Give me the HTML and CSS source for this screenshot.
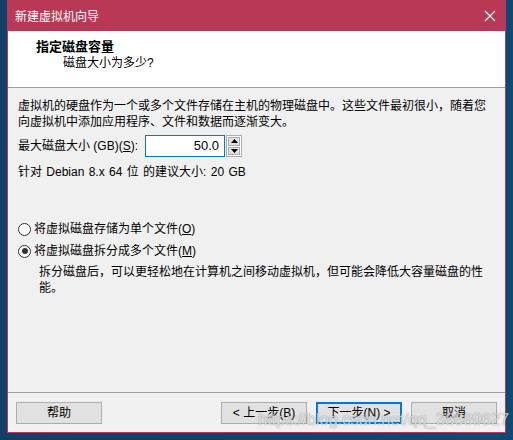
FILE: index.html
```html
<!DOCTYPE html>
<html lang="zh-CN">
<head>
<meta charset="utf-8">
<title>新建虚拟机向导</title>
<link rel="stylesheet" href="styles.css">
</head>
<body>
<div class="window">
  <div class="titlebar">
    <span class="title">新建虚拟机向导</span>
    <svg class="close" width="12" height="12" viewBox="0 0 12 12"><path d="M1 1 L11 11 M11 1 L1 11" stroke="#fff" stroke-width="1.3" fill="none"/></svg>
  </div>
  <div class="header">
    <div class="h-title">指定磁盘容量</div>
    <div class="h-sub">磁盘大小为多少?</div>
  </div>
  <div class="content">
    <p class="intro">虚拟机的硬盘作为一个或多个文件存储在主机的物理磁盘中。这些文件最初很小，随着您向虚拟机中添加应用程序、文件和数据而逐渐变大。</p>
    <div class="size-row">
      <span class="size-label">最大磁盘大小 (GB)(<u>S</u>):</span>
      <div class="spin">
        <div class="spin-input">50.0</div>
        <div class="spin-btns">
          <div class="spin-btn"><svg width="7" height="4" viewBox="0 0 7 4"><path d="M0 4 L3.5 0 L7 4 Z" fill="#000"/></svg></div>
          <div class="spin-btn"><svg width="7" height="4" viewBox="0 0 7 4"><path d="M0 0 L3.5 4 L7 0 Z" fill="#000"/></svg></div>
        </div>
      </div>
    </div>
    <p class="recommend">针对 Debian 8.x 64 位 的建议大小: 20 GB</p>
    <div class="radios">
      <div class="radio-row"><span class="radio"></span><span>将虚拟磁盘存储为单个文件(<u>O</u>)</span></div>
      <div class="radio-row"><span class="radio checked"></span><span>将虚拟磁盘拆分成多个文件(<u>M</u>)</span></div>
      <p class="desc">拆分磁盘后，可以更轻松地在计算机之间移动虚拟机，但可能会降低大容量磁盘的性能。</p>
    </div>
  </div>
  <div class="footer">
    <button class="btn">帮助</button>
    <div class="spacer"></div>
    <button class="btn">&lt; 上一步(B)</button>
    <button class="btn default">下一步(N) &gt;</button>
    <button class="btn">取消</button>
  </div>
</div>
<div class="watermark">https://blog.csdn.net/qq_38689627</div>
</body>
</html>
```
FILE: styles.css
```css
* { box-sizing: border-box; }
html, body { margin: 0; padding: 0; }
body {
  width: 513px;
  height: 440px;
  background: linear-gradient(90deg, #123f66 0%, #0d4a72 100%);
  font-family: "Liberation Sans", "Noto Sans CJK SC", sans-serif;
  font-size: 12px;
  line-height: 16px;
  color: #000;
  position: relative;
  overflow: hidden;
}
.window {
  margin-left: 7px;
  width: 499px;
  height: 433px;
  border: 1px solid #b93855;
  border-top: none;
  background: #f0f0f0;
  display: flex;
  flex-direction: column;
}
.titlebar {
  height: 31px;
  background: #b93855;
  color: #fff;
  display: flex;
  align-items: center;
  justify-content: space-between;
  padding: 0 9px 0 7px;
}
.title { font-family: "Noto Sans CJK SC", sans-serif; font-size: 12px; }
.close { display: block; }
.header {
  height: 57px;
  background: #fff;
  border-bottom: 1px solid #a0a0a0;
  padding: 8px 0 0 28px;
}
.h-title { font-weight: bold; font-size: 13px; }
.h-sub { padding-left: 27px; }
.content {
  flex: 1;
  padding: 10px 0 0 10px;
}
.intro { margin: 0; width: 470px; }
.size-row {
  display: flex;
  align-items: center;
  margin-top: 5px;
  height: 22px;
}
.size-label { width: 127px; }
.spin { display: flex; height: 22px; }
.spin-input {
  width: 80px;
  height: 22px;
  border: 1px solid #0078d7;
  background: #fff;
  text-align: right;
  padding: 2px 5px 0 0;
  font-size: 13px;
}
.spin-btns {
  margin-left: 1px;
  width: 16px;
  height: 22px;
  border: 1px solid #adadad;
  background: #fff;
  display: flex;
  flex-direction: column;
  gap: 1px;
  padding: 1px;
}
.spin-btn {
  flex: 1;
  background: #e1e1e1;
  border: 1px solid #adadad;
  display: flex;
  align-items: center;
  justify-content: center;
}
.spin-btn svg { display: block; }
.recommend { margin: 7px 0 0; word-spacing: 1px; }
.radios { margin-top: 41px; }
.radio-row {
  display: flex;
  align-items: center;
  height: 16px;
  margin-bottom: 6px;
}
.radio {
  width: 13px;
  height: 13px;
  border: 1px solid #333;
  border-radius: 50%;
  background: #fff;
  margin-right: 3px;
  position: relative;
}
.radio.checked::after {
  content: "";
  position: absolute;
  left: 2.5px;
  top: 2.5px;
  width: 6px;
  height: 6px;
  border-radius: 50%;
  background: #333;
}
.desc {
  margin: -1px 0 0 21px;
  width: 450px;
}
.footer {
  height: 40px;
  border-top: 1px solid #a0a0a0;
  display: flex;
  align-items: flex-start;
  padding: 9px 8px 0 8px;
  gap: 9px;
}
.spacer { flex: 1; }
.btn {
  width: 86px;
  height: 22px;
  background: #e1e1e1;
  border: 1px solid #adadad;
  font-family: "Liberation Sans", "Noto Sans CJK SC", sans-serif;
  font-size: 12px;
  line-height: 16px;
  color: #000;
  padding: 0;
}
.btn.default { border: 2px solid #0078d7; }
.watermark {
  position: absolute;
  left: 258px;
  top: 409px;
  font-family: "Liberation Sans", sans-serif;
  font-size: 17px;
  line-height: 22px;
  letter-spacing: -0.3px;
  color: rgba(255,255,255,0.7);
  text-shadow: 0 0 1px rgba(0,0,0,0.35), 0 0 2px rgba(0,0,0,0.15);
  white-space: nowrap;
}
```
